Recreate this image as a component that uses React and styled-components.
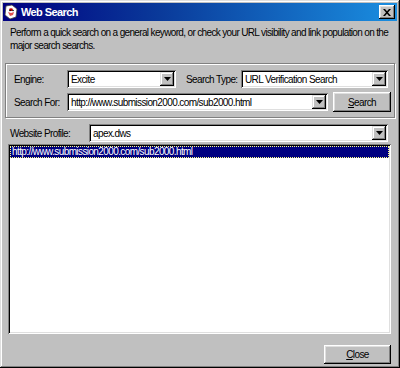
import React from "react";
import styled, { createGlobalStyle } from "styled-components";

const Global = createGlobalStyle`
  html, body { margin: 0; padding: 0; background: #c0c0c0; }
  body { font-family: "Liberation Sans", Arial, sans-serif; font-size: 10px; letter-spacing: -0.6px; color: #000; }
  * { box-sizing: border-box; }
`;

const Window = styled.div`
  width: 400px;
  height: 368px;
  background: #c0c0c0;
  padding: 3px;
  display: flex;
  flex-direction: column;
  box-shadow: inset -1px -1px #000, inset 1px 1px #dfdfdf, inset -2px -2px #808080, inset 2px 2px #fff;
`;

const TitleBar = styled.div`
  height: 18px;
  display: flex;
  align-items: center;
  padding: 0 2px 0 0;
  background: linear-gradient(90deg, #000080 0%, #0a3a9a 40%, #1a8ee0 100%);
  color: #fff;
`;

const TitleText = styled.span`
  font-weight: bold;
  font-size: 11px;
  letter-spacing: -0.6px;
  margin-left: 2px;
  flex: 1;
`;

const TitleButton = styled.div`
  width: 16px;
  height: 14px;
  background: #c0c0c0;
  box-shadow: inset -1px -1px #000, inset 1px 1px #fff, inset -2px -2px #808080, inset 2px 2px #dfdfdf;
  display: flex;
  align-items: center;
  justify-content: center;
`;

const Body = styled.div`
  flex: 1;
  display: flex;
  flex-direction: column;
  padding: 0 2px 1px 2px;
`;

const Description = styled.p`
  margin: 5px 0 0 5px;
  line-height: 13px;
  letter-spacing: -0.65px;
`;

const GroupBox = styled.div`
  margin-top: 11px;
  border: 1px solid #808080;
  box-shadow: inset 1px 1px 0 #fff, 1px 1px 0 #fff;
  padding: 6px 3px 5px 8px;
  display: flex;
  flex-direction: column;
  gap: 4px;
`;

const Row = styled.div`
  display: flex;
  align-items: center;
  height: ${(p) => p.$h || 18}px;
  padding-right: ${(p) => p.$pr || 0}px;
  margin: ${(p) => p.$m || "0"};
`;

const Label = styled.span`
  width: ${(p) => p.$w}px;
  margin-left: ${(p) => p.$ml || 0}px;
  flex: none;
  white-space: nowrap;
`;

const Combo = styled.div`
  height: 18px;
  width: ${(p) => (p.$w ? p.$w + "px" : "auto")};
  flex: ${(p) => (p.$w ? "none" : "1")};
  background: #fff;
  display: flex;
  align-items: center;
  padding: 2px;
  box-shadow: inset 1px 1px #808080, inset -1px -1px #fff, inset 2px 2px #000, inset -2px -2px #dfdfdf;
`;

const ComboText = styled.span`
  flex: 1;
  padding-left: 2px;
  white-space: nowrap;
  overflow: hidden;
`;

const ArrowButton = styled.div`
  width: 14px;
  height: 14px;
  background: #c0c0c0;
  box-shadow: inset -1px -1px #000, inset 1px 1px #dfdfdf, inset -2px -2px #808080, inset 2px 2px #fff;
  display: flex;
  align-items: center;
  justify-content: center;
`;

const Button = styled.div`
  width: ${(p) => p.$w}px;
  height: ${(p) => p.$h}px;
  margin-left: ${(p) => p.$ml || 0}px;
  flex: none;
  background: #c0c0c0;
  box-shadow: inset -1px -1px #000, inset 1px 1px #fff, inset -2px -2px #808080, inset 2px 2px #dfdfdf;
  display: flex;
  align-items: center;
  justify-content: center;
`;

const ListBox = styled.div`
  flex: 1;
  margin: 2px 4px 0 3px;
  background: #fff;
  padding: 2px;
  box-shadow: inset 1px 1px #808080, inset -1px -1px #fff, inset 2px 2px #000, inset -2px -2px #dfdfdf;
`;

const ListItem = styled.div`
  height: 12px;
  line-height: 11px;
  padding-left: 2px;
  background: ${(p) => (p.$selected ? "#000080" : "transparent")};
  color: ${(p) => (p.$selected ? "#fff" : "#000")};
  outline: 1px dotted #ffff80;
  outline-offset: -1px;
  white-space: nowrap;
`;

const Footer = styled.div`
  display: flex;
  justify-content: flex-end;
  padding: 11px 4px 0 0;
`;

const Arrow = () => (
  <svg width="7" height="4" viewBox="0 0 7 4">
    <path d="M0 0h7L3.5 4z" fill="#000" />
  </svg>
);

const Select = ({ w, children }) => (
  <Combo $w={w}>
    <ComboText>{children}</ComboText>
    <ArrowButton>
      <Arrow />
    </ArrowButton>
  </Combo>
);

const AppIcon = () => (
  <svg width="16" height="16" viewBox="0 0 16 16">
    <path d="M3 2l6-1 5 4-1 8-6 2-5-4z" fill="#fff" stroke="#404040" strokeWidth="0.8" />
    <path d="M6 5c1-1 3-1 4 0l-1 2-2 0z" fill="#c00000" />
    <path d="M5 8l3 1 3-1-1 3-3 1z" fill="#e05050" />
    <circle cx="7" cy="6.5" r="0.8" fill="#000" />
    <circle cx="10" cy="6.5" r="0.8" fill="#000" />
  </svg>
);

export default function App() {
  return (
    <>
      <Global />
      <Window>
        <TitleBar>
          <AppIcon />
          <TitleText>Web Search</TitleText>
          <TitleButton>
            <svg width="8" height="7" viewBox="0 0 8 7">
              <path d="M0 0h2l2 2.2L6 0h2L5 3.5 8 7H6L4 4.8 2 7H0l3-3.5z" fill="#000" />
            </svg>
          </TitleButton>
        </TitleBar>
        <Body>
          <Description>
            Perform a quick search on a general keyword, or check your URL visibility and link population on the major search searchs.
          </Description>
          <GroupBox>
            <Row $pr={3}>
              <Label $w={53}>Engine:</Label>
              <Select w={109}>Excite</Select>
              <Label $w={55} $ml={10}>Search Type:</Label>
              <Select>URL Verification Search</Select>
            </Row>
            <Row $h={20}>
              <Label $w={53}>Search For:</Label>
              <Select>http://www.submission2000.com/sub2000.html</Select>
              <Button $w={58} $h={20} $ml={5}>
                <span><u>S</u>earch</span>
              </Button>
            </Row>
          </GroupBox>
          <Row $m="6px 7px 0 5px">
            <Label $w={79}>Website Profile:</Label>
            <Select>apex.dws</Select>
          </Row>
          <ListBox>
            <ListItem $selected>http://www.submission2000.com/sub2000.html</ListItem>
          </ListBox>
          <Footer>
            <Button $w={67} $h={19}>
              <span><u>C</u>lose</span>
            </Button>
          </Footer>
        </Body>
      </Window>
    </>
  );
}
